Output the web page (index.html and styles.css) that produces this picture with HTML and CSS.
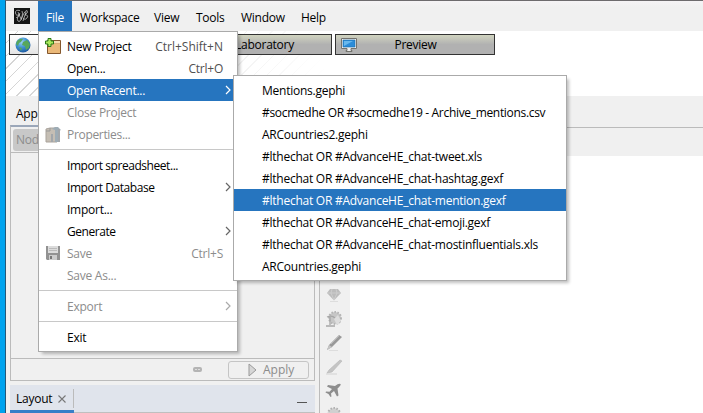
FILE: index.html
```html
<!DOCTYPE html>
<html lang="en">
<head>
<meta charset="utf-8">
<title>Gephi</title>
<link rel="stylesheet" href="styles.css">
</head>
<body>
<div class="desktop">
  <div class="window">
    <nav class="menubar">
      <svg class="logo" width="16" height="16" viewBox="0 0 16 16"><rect width="16" height="16" fill="#141414"/><g fill="none" stroke="#d4d4d4" stroke-width=".7"><path d="M6 2.500Q1 1.500 1.500 5T5.500 6.500Q3 11 2 9M6 5Q2 11 4 13T8 9Q9 5 8 3M7 12Q10 3 13 2.500Q15 4 11 7Q15 7 13 10T9 10M9 13l3-9M4 4l3 7"/></g></svg>
      <span class="top open t-file">File</span><span class="top t-work">Workspace</span><span class="top t-view">View</span><span class="top t-tools">Tools</span><span class="top t-window">Window</span><span class="top">Help</span>
    </nav>
    <div class="banner">
      <div class="mode active">
        <svg width="16" height="16" viewBox="0 0 16 16"><defs><radialGradient id="sea" cx=".4" cy=".3" r=".75"><stop offset="0" stop-color="#9bd2f6"/><stop offset=".5" stop-color="#3f91d2"/><stop offset="1" stop-color="#1c559c"/></radialGradient></defs><circle cx="8" cy="8" r="7.500" fill="url(#sea)"/><path d="M2 4Q5 1 8 2L6 5 4 6 3 9 1 7ZM8 5l4-2 3 4-1 4-3 2-1-4-3-1ZM4 10l3 1-1 3Z" fill="#57a75c"/></svg>
      </div>
      <div class="mode"><span class="lab">Laboratory</span></div>
      <div class="mode">
        <svg width="16" height="16" viewBox="0 0 16 16"><path d="M.5 1.500h15v10H10v2h1v1H5v-1h1v-2H.5Z" fill="#eee" stroke="#73736e"/><path d="M2 3h12v7H2Z" fill="#2b8cd8" stroke="#1c6fae" stroke-width=".6"/><path d="M3 4h9L3 9Z" fill="#68b8ed"/></svg>
        <span class="preview">Preview</span>
      </div>
    </div>
    <div class="workspace">
      <div class="side">
        <div class="tab-top">App</div>
        <div class="panel">
          <div class="panel-tools"><span class="nodes">Nod</span></div>
          <div class="panel-body"></div>
          <div class="panel-foot">
            <svg width="9" height="5" viewBox="0 0 9 5"><rect width="9" height="5" rx="2" fill="#b4b4b4"/><path d="M2 2.500h2M5 2.500h2" stroke="#ddd"/></svg>
            <div class="apply"><svg width="9" height="14" viewBox="0 0 9 14"><path d="M1 1v12l7-6Z" fill="#d6d6d6" stroke="#999"/></svg><span>Apply</span></div>
          </div>
        </div>
        <div class="layout-bar">
          <div class="layout-tab"><span>Layout</span><svg width="8" height="8" viewBox="0 0 8 8"><path d="M.5.5l7 7m0-7l-7 7" stroke="#777" stroke-width="1.100"/></svg></div>
          <i class="minimize"></i>
        </div>
      </div>
      <div class="graph">
        <div class="graph-head"></div>
        <div class="graph-main">
          <div class="tools">
            <svg viewBox="0 0 18 16"><path d="M5 2h8l3 4-7 7.500L2 6Z" fill="#bcbcbc"/><path d="M2 6h14M6 6l3 7 3-7-1-4M6 6l1-4" stroke="#d0d0d0" fill="none" stroke-width=".8"/><path d="M5 14.500h8" stroke="#ddd"/></svg>
            <svg viewBox="0 0 18 16"><circle cx="10" cy="7" r="6" fill="#c6c6c6" stroke="#b4b4b4" stroke-width="2" stroke-dasharray="1.500 1.500"/><path d="M2 6q5-2 8 1l5 5M5 6v8M1 15h9" stroke="#a6a6a6" stroke-width="1.300" fill="none"/><path d="M9 8l4-4 3 6-4 4Z" fill="#ddd"/></svg>
            <svg viewBox="0 0 18 16"><path d="M2 15l2-5L14 0l3 2L7 12Z" fill="#999"/><path d="M2 15l2-5 3 2Z" fill="#c4c4c4"/><path d="M6 9l8-8" stroke="#b8b8b8"/><path d="M4 15.500h9" stroke="#ddd"/></svg>
            <svg viewBox="0 0 18 16"><path d="M2 14l2-3L15 1l2 1L7 13Z" fill="#c4c4c4" stroke="#b5b5b5" stroke-width=".6"/><path d="M1 15h11" stroke="#d2d2d2"/></svg>
            <svg viewBox="0 0 18 16"><path d="M15.500 1q1 1-3 4.500l1 7-1.500 1-3-5.500-3 2.500.5 3-1 .5-2-3-3-1.500.5-1 3.500.3L7 6 2 3.500l1-1.500 7 1Q14-.2 15.500 1Z" fill="#8e8e8e"/></svg>
            <svg viewBox="0 0 18 16"><circle cx="9" cy="7" r="6" fill="#d0d0d0" stroke="#b0b0b0" stroke-width="2" stroke-dasharray="1.500 1.500"/></svg>
          </div>
          <div class="canvas"></div>
        </div>
      </div>
    </div>
  </div>
</div>

<div class="menu file-menu">
  <div class="item"><svg class="icon" width="17" height="17" viewBox="0 0 17 17"><path d="M2.500 2.500h13v13h-13Z" fill="#eab878" stroke="#84572d"/><path d="M3 3h12v3H3Z" fill="#f7dcb0"/><path d="M3 5.500h12" stroke="#c98b4c" stroke-width=".6"/><path d="M3 .5h3V3h2.500v3H6v2.500H3V6H.5V3H3Z" fill="#a9e75a" stroke="#287818"/></svg><span>New Project</span><kbd class="k1">Ctrl+Shift+N</kbd></div>
  <div class="item"><span>Open...</span><kbd>Ctrl+O</kbd></div>
  <div class="item selected"><span>Open Recent...</span><svg class="arrow" viewBox="0 0 6 10"><path d="M1 1l4 4-4 4"/></svg></div>
  <div class="item off"><span>Close Project</span></div>
  <div class="item off"><svg class="icon" width="17" height="17" viewBox="0 0 17 17"><path d="M1 3l4-1h7v14H1Z" fill="#c5beb4" stroke="#aaa39b"/><path d="M1 5h4V2" stroke="#999" fill="none"/><path d="M7 3l3-2h3l3 3-2 1-1-1v12h-3V4Z" fill="#9eacb5"/><path d="M14 3v13M7 8v8" stroke="#a3a7ab" stroke-width="2"/></svg><span class="snug">Properties...</span></div>
  <hr>
  <div class="item"><span class="tight">Import spreadsheet...</span></div>
  <div class="item"><span class="tight">Import Database</span><svg class="arrow" viewBox="0 0 6 10"><path d="M1 1l4 4-4 4"/></svg></div>
  <div class="item"><span>Import...</span></div>
  <div class="item"><span class="tight">Generate</span><svg class="arrow" viewBox="0 0 6 10"><path d="M1 1l4 4-4 4"/></svg></div>
  <div class="item off"><svg class="icon save" width="14" height="14" viewBox="0 0 14 14"><path d="M0 0h14v14H1L0 13Z" fill="#929292"/><path d="M2 0h10v7H2Z" fill="#dcdcdc"/><path d="M3 2.500h8M3 4.500h8" stroke="#bbb"/><path d="M3 9h8v5H3Z" fill="#ccc"/><path d="M4 10h2v3H4Z" fill="#777"/></svg><span>Save</span><kbd>Ctrl+S</kbd></div>
  <div class="item off"><span>Save As...</span></div>
  <hr>
  <div class="item off"><span>Export</span><svg class="arrow" viewBox="0 0 6 10"><path d="M1 1l4 4-4 4"/></svg></div>
  <hr>
  <div class="item"><span>Exit</span></div>
</div>

<div class="menu recent-menu">
  <div class="item"><span>Mentions.gephi</span></div>
  <div class="item"><span class="snug">#socmedhe OR #socmedhe19 - Archive_mentions.csv</span></div>
  <div class="item"><span>ARCountries2.gephi</span></div>
  <div class="item"><span>#lthechat OR #AdvanceHE_chat-tweet.xls</span></div>
  <div class="item"><span>#lthechat OR #AdvanceHE_chat-hashtag.gexf</span></div>
  <div class="item selected"><span>#lthechat OR #AdvanceHE_chat-mention.gexf</span></div>
  <div class="item"><span>#lthechat OR #AdvanceHE_chat-emoji.gexf</span></div>
  <div class="item"><span>#lthechat OR #AdvanceHE_chat-mostinfluentials.xls</span></div>
  <div class="item"><span>ARCountries.gephi</span></div>
</div>
</body>
</html>
```
FILE: styles.css
```css
* { box-sizing: border-box; }
body {
  margin: 0;
  width: 703px;
  height: 413px;
  overflow: hidden;
  font: 12px/22px "Open Sans", "Noto Sans", sans-serif;
  letter-spacing: -0.25px;
  color: #000;
  white-space: nowrap;
}
svg { display: block; flex: none; }
.desktop { height: 413px; padding-left: 5px; background: linear-gradient(90deg, #00a3ee, #0095df); }
.window {
  height: 413px;
  display: flex;
  flex-direction: column;
  background: #f0f0f0;
  border-left: 1px solid #245878;
  border-top: 1px solid #6d6b6d;
}
.menubar { height: 30px; flex: none; display: flex; align-items: center; background: linear-gradient(#f5f3f5, #f0f0f0 6px); }
.logo { margin: 0 8px; }
.top { height: 30px; line-height: 33px; padding: 0 8px; }
.open { background: #2675bf; color: #fff; }
.t-file { width: 34px; }
.t-work { width: 74px; }
.t-view { width: 42px; }
.t-tools { width: 45px; }
.t-window { width: 60px; }
.banner {
  height: 65px;
  flex: none;
  display: flex;
  gap: 3px;
  padding: 3px;
  background:
    linear-gradient(90deg, transparent, #fff 320px),
    repeating-linear-gradient(135deg, #fff 0 8px, #d4d4d4 8px 9px);
}
.mode {
  width: 160px;
  height: 21px;
  display: flex;
  align-items: center;
  border: 1px solid #333;
  background: linear-gradient(#d1d4c0, #b1b1b1 50%, #b1b1b1);
}
.mode svg { margin-left: 5px; }
.mode span { flex: 1; text-align: center; line-height: 20px; }
.mode .lab { text-align: right; padding-right: 37px; }
.mode .preview { padding-right: 20px; }
.active { background: linear-gradient(#fff, #e4e4e4); }
.workspace { flex: 1; display: flex; min-height: 0; }
.side { width: 305px; margin-left: 4px; display: flex; flex-direction: column; }
.tab-top { height: 29px; padding: 7px 0 0 6px; }
.panel { height: 256px; display: flex; flex-direction: column; border: 1px solid #bbb; border-top: 2px solid #9ba7b9; }
.panel-tools { height: 26px; padding: 2px; border-bottom: 1px solid #bbb; display: flex; }
.nodes { width: 56px; height: 22px; padding-left: 3px; background: #c8c8c8; color: #8c8c8c; border-radius: 3px; }
.panel-body { flex: 1; }
.panel-foot { height: 22px; display: flex; align-items: center; justify-content: flex-end; border-top: 1px solid #bbb; padding-right: 5px; gap: 26px; }
.apply { width: 81px; height: 18px; border: 1px solid #c5c5c5; border-radius: 3px; display: flex; align-items: center; padding-left: 19px; gap: 6px; color: #8c8c8c; letter-spacing: 0; }
.layout-bar { height: 28px; margin-top: 4px; display: flex; justify-content: space-between; align-items: flex-start; background: #e0e4ec; border-bottom: 1px solid #bfbfbf; }
.layout-tab { width: 64px; height: 28px; padding: 2px 0 0 6px; display: flex; align-items: center; gap: 6px; border-bottom: 3px solid #3a7fc8; background: linear-gradient(#bbb, #bbb) 63px 4px / 1px 19px no-repeat; }
.minimize { width: 10px; height: 1px; margin: 17px 8px 0 0; background: #555; }
.graph { flex: 1; margin-left: 4px; display: flex; flex-direction: column; }
.graph-head { height: 31px; flex: none; }
.graph-main { flex: 1; display: flex; border-top: 1px solid #bbb; border-left: 1px solid #bbb; }
.tools { width: 30px; padding: 159px 0 0 5px; height: 285px; overflow: hidden; }
.tools svg { width: 18px; height: 16px; margin-bottom: 8px; }
.canvas { flex: 1; margin-top: 28px; background: #fff; }
.menu { position: absolute; background: #fff; border: 1px solid #aaa; padding: 3px 0; box-shadow: 3px 3px 3px -1px rgba(0, 0, 0, .25); }
.file-menu { left: 38px; top: 31px; width: 200px; height: 321px; }
.recent-menu { left: 233px; top: 75px; width: 334px; height: 206px; }
.item { height: 22px; line-height: 23px; padding-left: 28px; display: flex; position: relative; }
.icon { position: absolute; left: 6px; top: 3px; }
.save { left: 7px; top: 4px; }
.off { color: #8c8c8c; }
.selected { background: #2675bf; color: #fff; }
.item kbd { font: inherit; margin-left: auto; margin-right: 14px; color: #505050; }
.off kbd { color: #8c8c8c; }
.arrow { width: 6px; height: 10px; margin: 6px 6px 0 auto; fill: none; stroke: #666; stroke-width: 1.2; }
.selected .arrow { stroke: #fff; }
.off .arrow { stroke: #aaa; }
.item .k1 { letter-spacing: 0; }
.snug { letter-spacing: -.32px; }
.tight { letter-spacing: -.44px; }
hr { margin: 4px 0; height: 1px; border: 0; background: #c8c8c8; }
```
